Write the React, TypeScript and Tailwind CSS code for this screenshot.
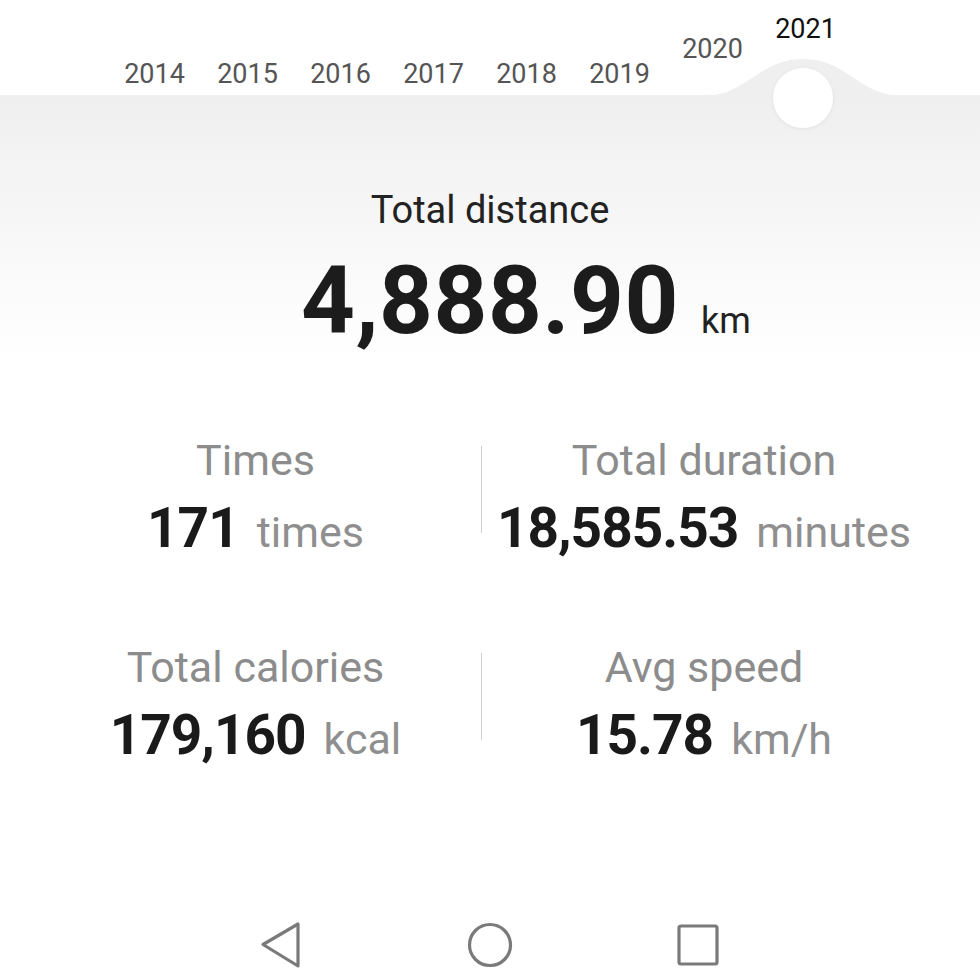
const years = [
  { y: '2014', pb: 'pb-[5px]', c: 'text-[#555]' },
  { y: '2015', pb: 'pb-[5px]', c: 'text-[#555]' },
  { y: '2016', pb: 'pb-[5px]', c: 'text-[#555]' },
  { y: '2017', pb: 'pb-[5px]', c: 'text-[#555]' },
  { y: '2018', pb: 'pb-[5px]', c: 'text-[#555]' },
  { y: '2019', pb: 'pb-[5px]', c: 'text-[#555]' },
  { y: '2020', pb: 'pb-[30px]', c: 'text-[#555]' },
  { y: '2021', pb: 'pb-[50px]', c: 'text-[#111]' },
]

function Stat({ label, value, unit }: { label: string; value: string; unit: string }) {
  return (
    <div className="flex flex-col items-center">
      <div className="text-[43px] leading-[50px] text-[#8c8c8c]">{label}</div>
      <div className="mt-[16px] flex items-baseline">
        <span className="text-[55px] leading-none font-bold text-[#1a1a1a] tracking-[-1px]">{value}</span>
        <span className="ml-[18px] text-[43px] leading-none text-[#8f8f8f]">{unit}</span>
      </div>
    </div>
  )
}

function Divider() {
  return <div className="mt-[11px] h-[87px] w-px bg-[#cfcfcf]" />
}

export default function App() {
  return (
    <div className="relative flex h-[980px] w-[980px] flex-col overflow-hidden bg-white font-['Roboto',sans-serif]">
      <div className="relative flex h-[95px] items-end pl-[108px]">
        {years.map((it) => (
          <div key={it.y} className={`w-[93px] text-center text-[27px] leading-[32px] ${it.pb} ${it.c}`}>
            {it.y}
          </div>
        ))}
      </div>

      <svg className="absolute left-0 top-0" width="980" height="130" viewBox="0 0 980 130">
        <defs>
          <filter id="sh" x="-50%" y="-50%" width="200%" height="200%">
            <feDropShadow dx="0" dy="1" stdDeviation="2" floodColor="#000" floodOpacity="0.06" />
          </filter>
        </defs>
        <path d="M690 96 L702 96 C748 96 758 59 803 59 C848 59 858 96 904 96 L920 96 Z" fill="#efefef" />
        <circle cx="803" cy="98" r="30" fill="#fff" filter="url(#sh)" />
      </svg>

      <div className="flex flex-1 flex-col bg-[linear-gradient(to_bottom,#efefef_0px,#ffffff_265px)]">
        <div className="pt-[93px] text-center text-[38px] leading-[44px] text-[#222]">Total distance</div>
        <div className="mt-[22px] grid grid-cols-[1fr_auto_1fr] items-baseline">
          <div />
          <span className="text-[94px] leading-none font-bold text-[#1c1c1c] tracking-[0.5px]">4,888.90</span>
          <span className="ml-[22px] text-[36px] leading-none text-[#222]">km</span>
        </div>

        <div className="mt-[87px] grid grid-cols-[451px_1px_444px] gap-y-[86px] pl-[30px]">
          <Stat label="Times" value="171" unit="times" />
          <Divider />
          <Stat label="Total duration" value="18,585.53" unit="minutes" />
          <Stat label="Total calories" value="179,160" unit="kcal" />
          <Divider />
          <Stat label="Avg speed" value="15.78" unit="km/h" />
        </div>

        <div className="mt-auto flex h-[70px] items-center justify-center gap-[148px]">
          <div className="flex w-[60px] justify-center">
            <svg width="44" height="48" viewBox="0 0 44 48" fill="none" stroke="#7a7a7a" strokeWidth="3.2" strokeLinejoin="round">
              <path d="M38 3 L38 45 L3 23.5 Z" />
            </svg>
          </div>
          <div className="flex w-[60px] justify-center">
            <svg width="48" height="48" viewBox="0 0 48 48" fill="none" stroke="#7a7a7a" strokeWidth="3.2">
              <circle cx="24" cy="24" r="20.5" />
            </svg>
          </div>
          <div className="flex w-[60px] justify-center">
            <svg width="44" height="44" viewBox="0 0 44 44" fill="none" stroke="#7a7a7a" strokeWidth="3.2">
              <rect x="3" y="3" width="38" height="38" rx="2" />
            </svg>
          </div>
        </div>
      </div>
    </div>
  )
}
